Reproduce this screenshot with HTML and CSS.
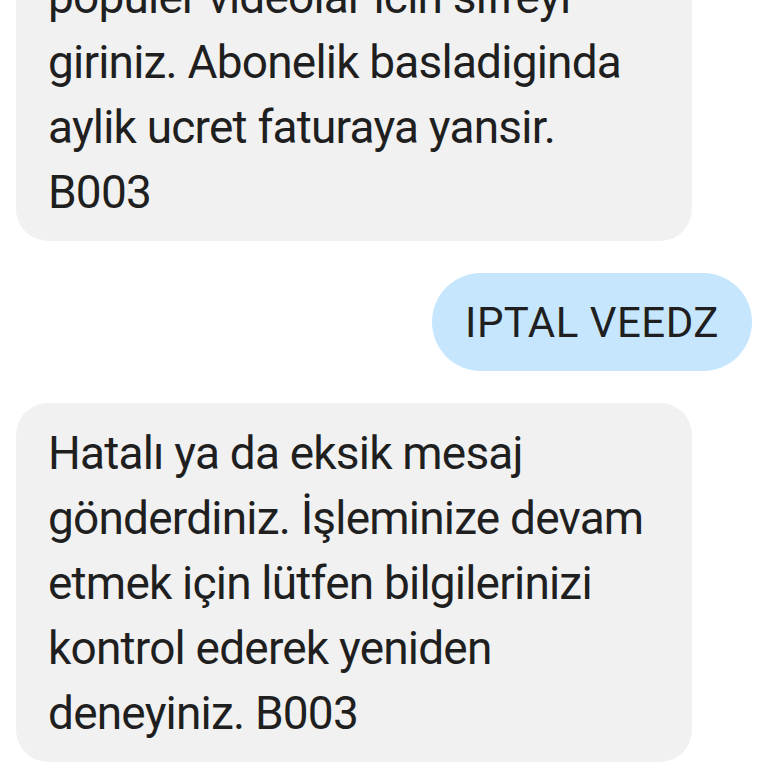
FILE: index.html
```html
<!DOCTYPE html>
<html lang="tr">
<head>
    <meta charset="UTF-8">
    <meta name="viewport" content="width=device-width, initial-scale=1.0">
    <title>Mesajlar</title>
    <link rel="stylesheet" href="styles.css">
</head>
<body>

    <div class="thread">
        <!-- incoming -->
        <div class="bubble incoming first">
            populer videolar icin sifreyi giriniz. Abonelik basladiginda aylik ucret faturaya yansir. B003
        </div>

        <!-- outgoing -->
        <div class="bubble outgoing">IPTAL VEEDZ</div>

        <div class="bubble incoming">
            Hatalı ya da eksik mesaj gönderdiniz. İşleminize devam etmek için lütfen bilgilerinizi kontrol ederek yeniden deneyiniz. B003
        </div>
    </div>

</body>
</html>
```

FILE: styles.css
```css
body {
    margin: 0;
    background: #ffffff;
    font-family: Roboto, 'Noto Sans', sans-serif;
    color: #1f1f1f;
    height: 768px;
    overflow: hidden;
}

.thread {
    display: flex;
    flex-direction: column;
    gap: 32px;
    padding: 0 16px;
}

.bubble {
    box-sizing: border-box;
    border-radius: 32px;
}

.incoming {
    align-self: flex-start;
    width: 676px;
    background: #f1f1f1;
    padding: 18px 30px 16px 32px;
    font-size: 46px;
    line-height: 65px;
    letter-spacing: -0.8px;
}

.first {
    margin-top: -53px;
}

.outgoing {
    align-self: flex-end;
    background: #c6e6fd;
    height: 98px;
    padding: 0 33px;
    border-radius: 49px;
    display: flex;
    align-items: center;
    font-size: 42px;
    letter-spacing: 0.5px;
}
```
